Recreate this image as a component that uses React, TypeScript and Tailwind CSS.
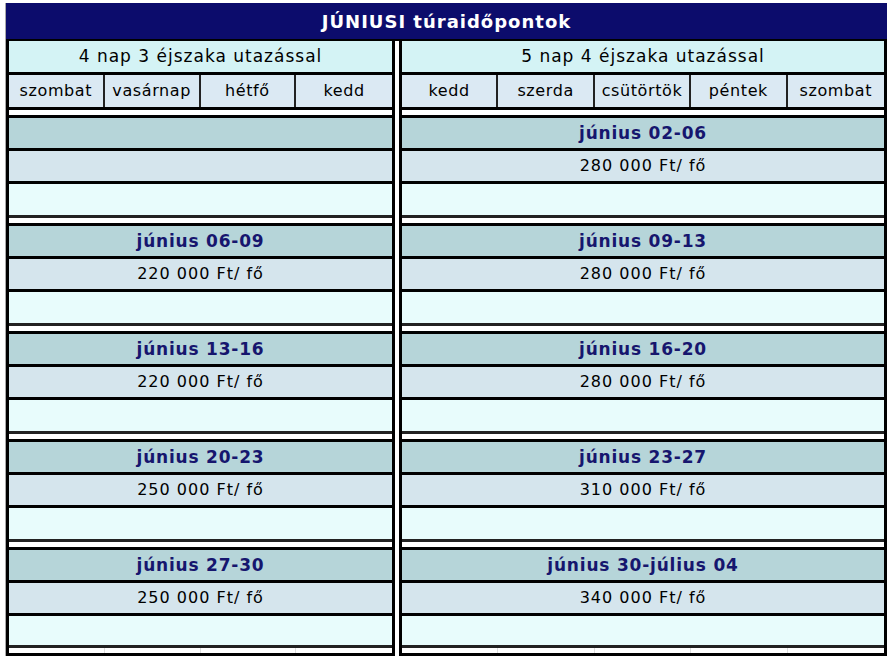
const left = {
  title: '4 nap 3 éjszaka utazással',
  days: ['szombat', 'vasárnap', 'hétfő', 'kedd'],
  blocks: [
    { date: '', price: '' },
    { date: 'június 06-09', price: '220 000 Ft/ fő' },
    { date: 'június 13-16', price: '220 000 Ft/ fő' },
    { date: 'június 20-23', price: '250 000 Ft/ fő' },
    { date: 'június 27-30', price: '250 000 Ft/ fő' },
  ],
}

const right = {
  title: '5 nap 4 éjszaka utazással',
  days: ['kedd', 'szerda', 'csütörtök', 'péntek', 'szombat'],
  blocks: [
    { date: 'június 02-06', price: '280 000 Ft/ fő' },
    { date: 'június 09-13', price: '280 000 Ft/ fő' },
    { date: 'június 16-20', price: '280 000 Ft/ fő' },
    { date: 'június 23-27', price: '310 000 Ft/ fő' },
    { date: 'június 30-július 04', price: '340 000 Ft/ fő' },
  ],
}

type Panel = typeof left

function TourPanel({ panel, className }: { panel: Panel; className: string }) {
  const cols = panel.days.length === 4 ? 'grid-cols-4' : 'grid-cols-5'
  const last = panel.blocks.length - 1
  return (
    <div className={`flex flex-col border-x-[3px] border-black ${className}`}>
      <div className="h-[31px] flex items-center justify-center bg-[#d4f3f5] text-[17px] tracking-[1px] text-black">
        {panel.title}
      </div>
      {/* day names */}
      <div className={`grid ${cols} h-[38px] border-t-[3px] border-b-[3px] border-black bg-[#dbe9f3]`}>
        {panel.days.map((d, i) => (
          <div
            key={d + i}
            className={`flex items-center justify-center text-[16px] tracking-[0.6px] text-black ${
              i < panel.days.length - 1 ? 'border-r-2 border-[#222]' : ''
            }`}
          >
            {d}
          </div>
        ))}
      </div>
      <div className="h-[5px] bg-white" />
      {panel.blocks.map((b, i) => (
        <div key={i} className="flex flex-col border-t-[3px] border-black">
          <div className="h-[30px] pt-[2px] flex items-center justify-center bg-[#b6d5d9] text-[17px] font-bold tracking-[0.8px] text-[#16166e]">
            {b.date}
          </div>
          <div className="h-[33px] flex items-center justify-center border-t-[3px] border-black bg-[#d5e5ed] text-[16px] tracking-[1px] text-black">
            {b.price}
          </div>
          <div className={`${i === last ? 'h-[32px]' : 'h-[34px]'} border-t-[3px] border-black bg-[#e8fcfc]`} />
          <div className="h-[3px] bg-[#222]" />
          {i < last ? (
            <div className="h-[5px] bg-white" />
          ) : (
            <div className={`grid ${cols} h-[5px] bg-white`}>
              {panel.days.map((d, j) => (
                <div key={d + j} className={j < panel.days.length - 1 ? 'border-r border-[#ddd]' : ''} />
              ))}
            </div>
          )}
        </div>
      ))}
      <div className="h-[3px] bg-black" />
    </div>
  )
}

export default function App() {
  return (
    <div className="w-[893px] h-[663px] bg-white overflow-hidden pt-[3px] pl-[5px]" style={{ fontFamily: '"DejaVu Sans", sans-serif' }}>
      <div className="w-[882px] border-l border-[#aaa]">
        <div className="h-[38px] flex items-center justify-center bg-[#0c0c6c] border-b-2 border-black text-white text-[18px] font-bold tracking-[1px]">
          JÚNIUSI túraidőpontok
        </div>
        <div className="flex gap-[4px]">
          <TourPanel panel={left} className="w-[389px]" />
          <TourPanel panel={right} className="w-[488px]" />
        </div>
      </div>
    </div>
  )
}
